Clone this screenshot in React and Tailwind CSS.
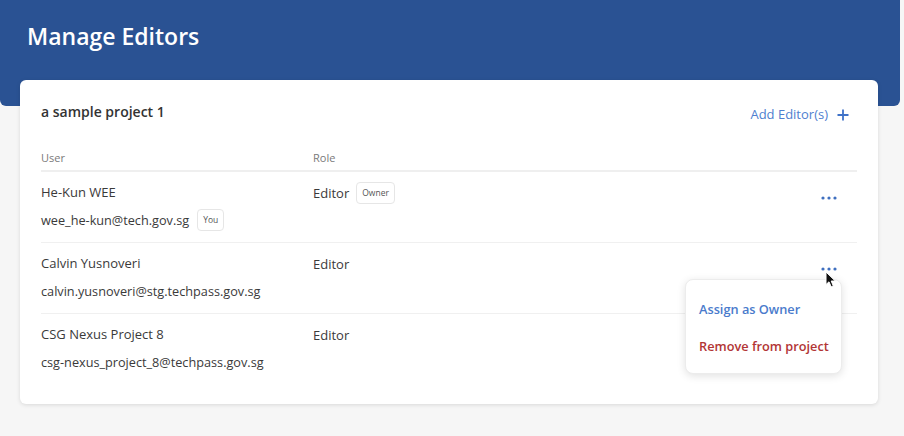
export default function App() {
  const rows = [
    { name: "He-Kun WEE", email: "wee_he-kun@tech.gov.sg", you: true, owner: true },
    { name: "Calvin Yusnoveri", email: "calvin.yusnoveri@stg.techpass.gov.sg", menu: true },
    { name: "CSG Nexus Project 8", email: "csg-nexus_project_8@techpass.gov.sg" },
  ];

  return (
    <div className="min-h-[436px] w-[904px] bg-[#f6f6f6] text-[#3a3a3a]" style={{ fontFamily: '"Open Sans", sans-serif' }}>
      <div className="h-[106px] w-[900px] rounded-br-md rounded-bl-md bg-[#2a5293] px-[27px] pt-[19px]">
        <h1 className="text-[23px] font-semibold leading-[34px] text-white">Manage Editors</h1>
      </div>

      <div className="relative mx-[20px] -mt-[26px] w-[858px] rounded-md bg-white px-[21px] pb-[19px] pt-[22px] shadow-[0_1px_4px_rgba(0,0,0,0.12)]">
        <div className="flex items-center justify-between">
          <h2 className="text-[14px] font-semibold leading-[20px] text-[#333]">a sample project 1</h2>
          <button className="mr-[8px] flex translate-y-[2px] items-center gap-[9px] text-[13px] leading-[20px] text-[#4f7fcf]">
            Add Editor(s)
            <svg width="12" height="12" viewBox="0 0 12 12" className="mt-[2px]">
              <path d="M6 0.5V11.5M0.5 6H11.5" stroke="#3f72c8" strokeWidth="1.8" />
            </svg>
          </button>
        </div>

        <div className="mt-[28px] grid grid-cols-[272px_1fr] border-b-2 border-[#efefef] pb-[4px] text-[11px] leading-[16px] text-[#7a7a7a]">
          <span>User</span>
          <span>Role</span>
        </div>

        {rows.map((r, i) => (
          <div
            key={r.email}
            className={`grid h-[71px] grid-cols-[272px_1fr_40px] pt-[10px] text-[13px] ${i < rows.length - 1 ? "border-b border-[#f0f0f0]" : ""}`}
          >
            <div>
              <div className="leading-[20px]">{r.name}</div>
              <div className="mt-[7px] flex items-center gap-[8px] text-[12.7px] leading-[22px]">
                {r.email}
                {r.you && (
                  <span className="rounded-[4px] border border-[#e6e6e6] px-[5px] text-[8.5px] leading-[20px] text-[#555]">You</span>
                )}
              </div>
            </div>
            <div className="flex items-start gap-[7px]">
              <span className="mt-[1px] leading-[20px]">Editor</span>
              {r.owner && (
                <span className="rounded-[4px] border border-[#e6e6e6] px-[5px] text-[8.5px] leading-[20px] text-[#555]">Owner</span>
              )}
            </div>
            <div className="flex justify-end pt-[14px]">
              {i < 2 && (
                <svg width="16" height="4" viewBox="0 0 16 4" className="mr-[20px]">
                  <circle cx="2" cy="2" r="1.6" fill="#3f6fbf" />
                  <circle cx="8" cy="2" r="1.6" fill="#3f6fbf" />
                  <circle cx="14" cy="2" r="1.6" fill="#3f6fbf" />
                </svg>
              )}
            </div>
          </div>
        ))}

        <div className="absolute left-[665px] top-[199px] h-[95px] w-[157px] rounded-lg border border-[#ececec] bg-white px-[13px] pt-[19px] text-[12.75px] font-semibold whitespace-nowrap shadow-[0_2px_8px_rgba(0,0,0,0.12)]">
          <div className="leading-[20px] text-[#4a7bcc]">Assign as Owner</div>
          <div className="mt-[17px] leading-[20px] text-[#b23535]">Remove from project</div>
        </div>

        <svg width="12" height="17" viewBox="0 0 12 17" className="absolute left-[805px] top-[191px]">
          <path d="M1 1L1 13.5L4 10.8L6.2 15.8L8.3 14.9L6.2 10H10.3Z" fill="#111" stroke="#fff" strokeWidth="1" />
        </svg>
      </div>
    </div>
  );
}
